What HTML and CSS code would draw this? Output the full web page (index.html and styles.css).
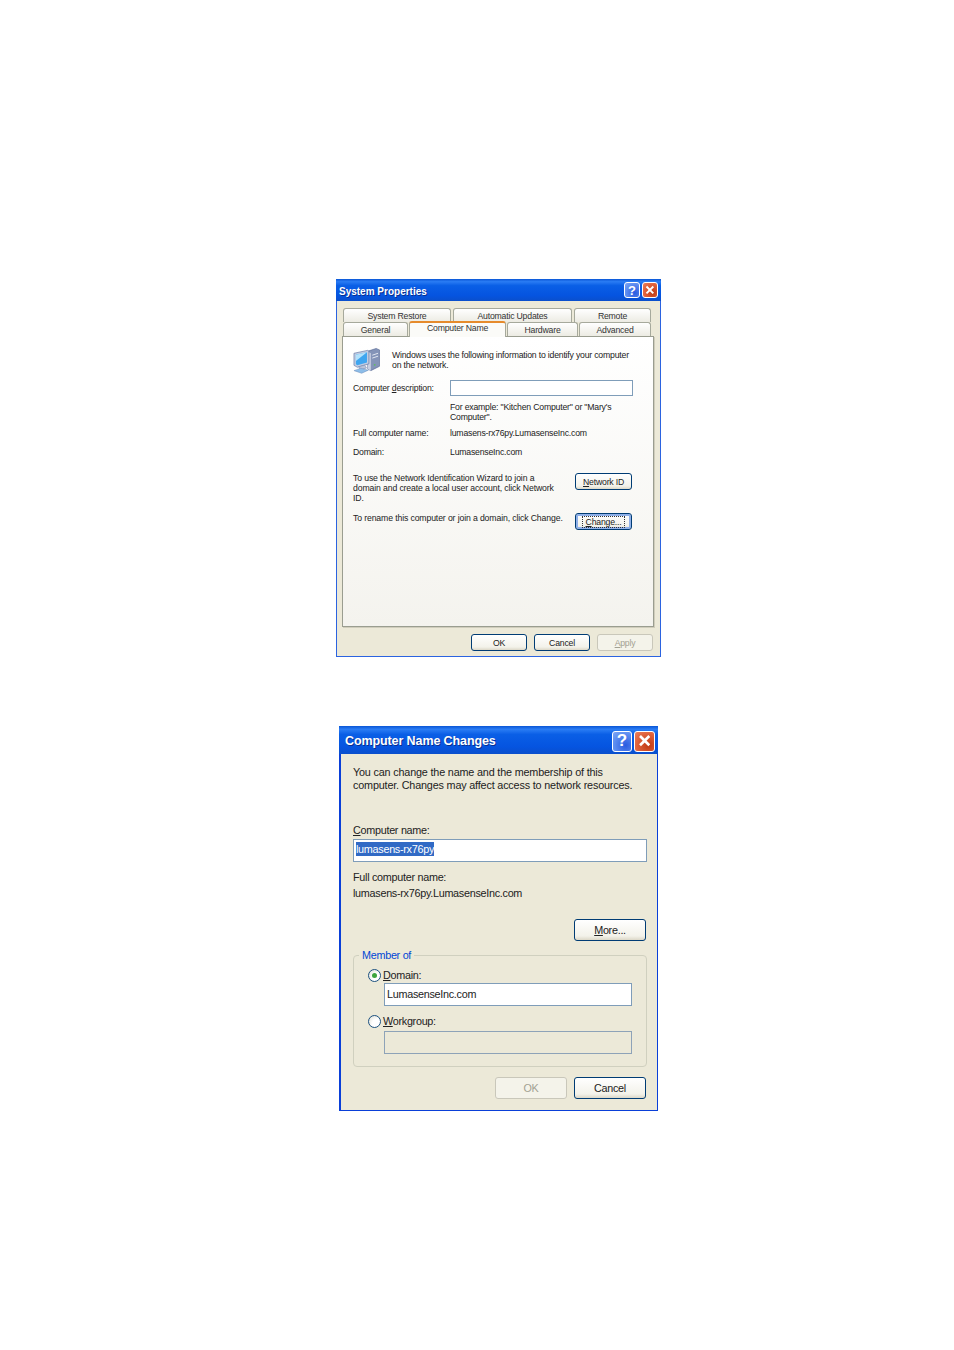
FILE: index.html
```html
<!DOCTYPE html>
<html lang="en">
<head>
<meta charset="utf-8">
<title>System Properties</title>
<link rel="stylesheet" href="styles.css">
</head>
<body>
<section class="win sys">
  <header class="title sys-title">
    <span class="title-text">System Properties</span>
    <span class="cap cap-help">?</span>
    <span class="cap cap-close"><svg viewBox="0 0 10 10"><path d="M1.5 1.5l7 7M8.5 1.5l-7 7"/></svg></span>
  </header>
  <div class="sys-body">
    <div class="tabs tabs-top">
      <span class="tab t1">System Restore</span>
      <span class="tab t2">Automatic Updates</span>
      <span class="tab t3">Remote</span>
    </div>
    <div class="tabs tabs-bottom">
      <span class="tab t4">General</span>
      <span class="tab active">Computer Name</span>
      <span class="tab t6">Hardware</span>
      <span class="tab t7">Advanced</span>
    </div>
    <div class="panel">
      <div class="intro">
        <svg class="pc" viewBox="0 0 28 27">
          <path d="M15 4l9-3 3.500 1.500v17l-9 4.500-3.500-2z" fill="#8494b8" stroke="#4c5f8c" stroke-width=".6"/>
          <path d="M15 4l3.500 2v18l-3.500-2z" fill="#c9d1e3"/>
          <path d="M20 8l6-2M20 11l6-2" stroke="#e4e9f3" stroke-width="1"/>
          <circle cx="22.500" cy="18" r=".9" fill="#5ec05a"/>
          <path d="M1 6l14-3 1.500 1v13l-12 3.500-3.500-2z" fill="#c3cde2" stroke="#52689a" stroke-width=".6"/>
          <path d="M3 7.500l11.500-2.500v10.500l-10 2.800-1.500-1z" fill="#3fa6f0"/>
          <path d="M3 7.500l11.500-2.500-11.500 9z" fill="#b4e2fb"/>
          <path d="M6 20l6-1.800 2 3-6 2.300z" fill="#b9c4da" stroke="#6a7ca6" stroke-width=".5"/>
          <path d="M1 24l7-2.500 8 2-7 3.300z" fill="#8dbde8" stroke="#5a78ae" stroke-width=".4"/>
        </svg>
        <p class="intro-text">Windows uses the following information to identify your computer on the network.</p>
      </div>
      <div class="row row-desc">
        <span class="lbl">Computer <u>d</u>escription:</span>
        <span class="field desc-field"></span>
      </div>
      <div class="row row-example">
        <span class="lbl"></span>
        <p class="val">For example: "Kitchen Computer" or "Mary's Computer".</p>
      </div>
      <div class="row row-full">
        <span class="lbl">Full computer name:</span>
        <span class="val">lumasens-rx76py.LumasenseInc.com</span>
      </div>
      <div class="row row-domain">
        <span class="lbl">Domain:</span>
        <span class="val">LumasenseInc.com</span>
      </div>
      <div class="action action-net">
        <p class="action-text">To use the Network Identification Wizard to join a domain and create a local user account, click Network ID.</p>
        <button class="btn small"><u>N</u>etwork ID</button>
      </div>
      <div class="action action-change">
        <p class="action-text wide">To rename this computer or join a domain, click Change.</p>
        <button class="btn small focus"><span class="dots"><u>C</u>hange...</span></button>
      </div>
    </div>
    <div class="foot sys-foot">
      <button class="btn small">OK</button>
      <button class="btn small">Cancel</button>
      <button class="btn small off"><u>A</u>pply</button>
    </div>
  </div>
</section>

<section class="win cnc">
  <header class="title cnc-title">
    <span class="title-text">Computer Name Changes</span>
    <span class="cap cap-help">?</span>
    <span class="cap cap-close"><svg viewBox="0 0 10 10"><path d="M1.500 1.500l7 7M8.500 1.500l-7 7"/></svg></span>
  </header>
  <div class="cnc-body">
    <p class="cnc-intro">You can change the name and the membership of this computer. Changes may affect access to network resources.</p>
    <p class="cnc-label"><u>C</u>omputer name:</p>
    <div class="field name-field"><span class="sel">lumasens-rx76py</span></div>
    <p class="cnc-full">Full computer name:</p>
    <p class="cnc-fullval">lumasens-rx76py.LumasenseInc.com</p>
    <div class="more-row"><button class="btn big"><u>M</u>ore...</button></div>
    <div class="group">
      <span class="legend">Member of</span>
      <div class="radio-row first"><span class="radio on"></span><span><u>D</u>omain:</span></div>
      <div class="field opt-field">LumasenseInc.com</div>
      <div class="radio-row second"><span class="radio"></span><span><u>W</u>orkgroup:</span></div>
      <div class="field opt-field disabled"></div>
    </div>
    <div class="foot cnc-foot">
      <button class="btn big off">OK</button>
      <button class="btn big">Cancel</button>
    </div>
  </div>
</section>
</body>
</html>
```
FILE: styles.css
```css
* { box-sizing: border-box; }
html, body { margin: 0; padding: 0; }
body { position: relative; width: 954px; height: 1350px; background: #fff; font-family: "Liberation Sans", Arial, sans-serif; color: #222; overflow: hidden; }
p { margin: 0; }
.win { position: absolute; background: #ece9d8; display: flex; flex-direction: column; }
.sys { left: 336px; top: 279px; width: 325px; height: 378px; border: 1px solid #2b63e0; border-top: 0; font-size: 8.700px; letter-spacing: -.2px; }
.cnc { left: 339px; top: 726px; width: 319px; height: 385px; border: solid #0a3fd8; border-width: 0 1px 1px 2px; font-size: 10.800px; letter-spacing: -.28px; }
.title { display: flex; flex: none; align-items: center; color: #fff; font-weight: bold; background: linear-gradient(180deg, #0a56d6 0%, #2a7cf4 12%, #0a5fe6 30%, #0554e0 75%, #0a4fcc 100%); margin: 0 -1px; }
.sys-title { height: 22px; padding: 0 3px 0 3px; font-size: 10px; letter-spacing: 0; }
.sys-title .title-text { padding-top: 2px; }
.cnc-title { height: 28px; margin-left: -2px; padding: 2px 3px 0 6px; font-size: 12.500px; letter-spacing: -.1px; }
.title-text { flex: 1; text-shadow: 1px 1px 0 #0a2f90; }
.cap { display: flex; align-items: center; justify-content: center; border: 1px solid #fff; border-radius: 3px; color: #fff; font-weight: bold; letter-spacing: 0; }
.sys-title .cap { width: 16px; height: 16px; margin-left: 2px; font-size: 13px; }
.cnc-title .cap { width: 21px; height: 21px; margin-left: 2px; font-size: 17px; }
.cnc-title .cap-help { width: 20px; }
.cap-help { background: radial-gradient(circle at 70% 70%, #2a5ce0, #5c8cf0 60%, #7fa8f4); }
.cap-close { background: radial-gradient(circle at 70% 70%, #c03a14, #e0623c 60%, #ea8262); }
.cap svg { width: 70%; height: 70%; }
.cap path { stroke: #fff; stroke-width: 2; fill: none; }

.sys-body { flex: 1; display: flex; flex-direction: column; padding: 7px 6px 0 5px; }
.tabs { display: flex; position: relative; color: #333; }
.tab { display: block; text-align: center; border: 1px solid #a6a99c; border-bottom: 0; border-radius: 3px 3px 0 0; background: linear-gradient(180deg, #fff, #ecebe3); }
.tabs-top { height: 14px; padding-left: 1px; gap: 2px; line-height: 15px; }
.t1 { width: 108px; } .t2 { width: 119px; } .t3 { width: 77px; }
.tabs-bottom { height: 14px; padding-left: 1px; line-height: 15px; }
.t4 { width: 65px; } .t6 { width: 71px; margin-left: 1px; } .t7 { width: 72px; margin-left: 1px; }
.tab.active { position: relative; z-index: 1; width: 97px; height: 16px; margin: -1px 0 0 1px; background: #fbfbf8; border-top: 2px solid #e68b2c; line-height: 11px; }

.panel { height: 291px; border: 1px solid #9a9d90; background: linear-gradient(180deg, #fff 0%, #f4f3ee 100%); box-shadow: 1px 1px 0 #d0cdbc; padding: 10px 20px 0 10px; }
.intro { display: flex; gap: 12px; }
.pc { width: 27px; height: 27px; flex: none; }
.intro-text { width: 245px; line-height: 10px; padding-top: 3px; }
.row { display: grid; grid-template-columns: 97px 1fr; align-items: center; }
.row-desc { margin-top: 5px; height: 17px; }
.field { border: 1px solid #7f9db9; background: #fff; }
.desc-field { height: 16px; width: 183px; }
.row-example { margin-top: 6px; align-items: start; line-height: 10px; }
.row-full { margin-top: 6px; height: 10px; }
.row-domain { margin-top: 9px; height: 10px; }
.action { display: flex; justify-content: space-between; }
.action-net { margin-top: 16px; height: 31px; width: 279px; }
.action-change { margin-top: 9px; width: 279px; }
.action-text { width: 205px; line-height: 10px; letter-spacing: -.13px; }
.action-text.wide { width: 215px; white-space: nowrap; }
.btn { font-family: inherit; letter-spacing: inherit; color: #222; padding: 0; border: 1px solid #003c74; border-radius: 3px; background: linear-gradient(180deg, #fff 0%, #f3f2ea 80%, #dcd8c8 100%); display: flex; align-items: center; justify-content: center; }
.btn.small { width: 57px; height: 17px; font-size: 8.700px; }
.btn.big { width: 72px; height: 22px; font-size: 10.800px; }
.btn.off { border-color: #c9c7ba; color: #a3a192; background: #f4f3ea; }
.btn.focus { box-shadow: inset 0 0 0 2px #8fb0e8; }
.dots { outline: 1px dotted #333; padding: 0 3px; }
.foot { display: flex; justify-content: flex-end; gap: 7px; }
.sys-foot { margin: 7px 1px 0 0; }
.sys-foot .btn.small { width: 56px; }

.cnc-body { flex: 1; padding: 12px 10px 0 12px; }
.cnc-intro { width: 290px; line-height: 13px; letter-spacing: -.17px; }
.cnc-label { margin-top: 32px; line-height: 13px; }
.name-field { height: 23px; margin-top: 2px; padding: 2px 0 0 2px; line-height: 14px; }
.sel { background: #316ac5; color: #fff; display: inline-block; }
.cnc-full { margin-top: 9px; line-height: 13px; }
.cnc-fullval { margin-top: 3px; line-height: 13px; }
.more-row { display: flex; justify-content: flex-end; margin: 19px 1px 0 0; }
.group { position: relative; margin-top: 14px; height: 112px; border: 1px solid #d0d0bf; border-radius: 4px; padding: 0 14px 0 14px; }
.legend { position: absolute; left: 5px; top: -7px; padding: 0 3px; background: #ece9d8; color: #0046d5; line-height: 13px; }
.radio-row { display: flex; align-items: center; gap: 2px; line-height: 14px; }
.radio-row.first { margin-top: 12px; }
.radio-row.second { margin-top: 8px; }
.radio { width: 13px; height: 13px; border-radius: 50%; border: 1px solid #1c5180; background: radial-gradient(circle at 70% 70%, #fff 40%, #dcdcd0); flex: none; position: relative; }
.radio.on::after { content: ""; position: absolute; left: 3px; top: 3px; width: 5px; height: 5px; border-radius: 50%; background: #3ea53e; }
.opt-field { margin: 1px 0 0 16px; width: 248px; height: 23px; padding: 0 2px; line-height: 20px; }
.opt-field.disabled { background: #ece9d8; margin-top: 3px; border-color: #8ea3b8; }
.cnc-foot { margin: 10px 1px 0 0; }
```
